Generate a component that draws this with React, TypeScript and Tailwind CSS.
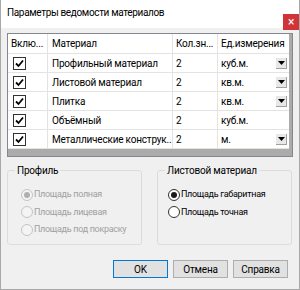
import React from "react";

const rows = [
  { name: "Профильный материал", qty: "2", unit: "куб.м.", combo: true },
  { name: "Листовой материал", qty: "2", unit: "кв.м.", combo: true },
  { name: "Плитка", qty: "2", unit: "кв.м.", combo: true },
  { name: "Объёмный", qty: "2", unit: "куб.м.", combo: false },
  { name: "Металлические конструк...", qty: "2", unit: "м.", combo: true },
];

const Check = () => (
  <div className="w-[13px] h-[13px] border border-[#333] bg-white flex items-center justify-center">
    <svg width="9" height="9" viewBox="0 0 9 9">
      <path d="M1 4.5 L3.5 7 L8 1.5" fill="none" stroke="#000" strokeWidth="1.8" />
    </svg>
  </div>
);

const ComboBtn = () => (
  <div className="w-[11px] h-[11px] bg-[#e8e8e8] border-r border-b border-[#a0a0a0] flex items-center justify-center">
    <svg width="7" height="4" viewBox="0 0 7 4">
      <path d="M0 0 H7 L3.5 4 Z" fill="#000" />
    </svg>
  </div>
);

const Radio = ({ checked, disabled, label }: { checked?: boolean; disabled?: boolean; label: string }) => (
  <div className="flex items-center h-[17.5px] whitespace-nowrap">
    <div
      className={
        "w-[12px] h-[12px] shrink-0 rounded-full border flex items-center justify-center " +
        (disabled ? "border-[#c4c4c4] bg-[#f4f4f4]" : "border-[#333] bg-white")
      }
    >
      {checked && (
        <div className={"w-[6px] h-[6px] rounded-full " + (disabled ? "bg-[#b0b0b0]" : "bg-[#1a1a1a]")} />
      )}
    </div>
    <span className={"ml-[1px] " + (disabled ? "text-[#a0a0a0]" : "text-black")}>{label}</span>
  </div>
);

export default function App() {
  return (
    <div
      className="w-[300px] h-[290px] bg-[#f0f0f0] border-x border-b border-[#a8a8a8] flex flex-col text-[10px] tracking-[-0.2px] text-black overflow-hidden"
      style={{ fontFamily: 'Roboto, "Noto Sans", sans-serif' }}
    >
      <div className="h-[28px] bg-white flex justify-between">
        <span className="pl-[6px] pt-[5px] text-[10px] tracking-[-0.35px]">Параметры ведомости материалов</span>
        <div className="mt-[14px] w-[16px] h-[16px] bg-[#d13438] text-white flex items-center justify-center text-[12px] leading-none">
          ×
        </div>
      </div>

      <div className="mx-[6px] mt-[5px] h-[124px] border border-[#828790] bg-[#ababab] flex flex-col">
        <div className="w-[281px] bg-white">
          <div className="flex h-[20px] border-b border-[#e3e3e3] whitespace-nowrap">
            <div className="w-[40px] px-[3px] flex items-center border-r border-[#e3e3e3]">Вклю...</div>
            <div className="w-[125px] px-[4px] flex items-center border-r border-[#e3e3e3]">Материал</div>
            <div className="w-[45px] px-[3px] flex items-center border-r border-[#e3e3e3]">Кол.зн...</div>
            <div className="flex-1 px-[3px] flex items-center">Ед.измерения</div>
          </div>
          {rows.map((r) => (
            <div key={r.name} className="flex h-[19px] border-b border-[#e3e3e3]">
              <div className="w-[40px] pl-[5px] flex items-center border-r border-[#e3e3e3]">
                <Check />
              </div>
              <div className="w-[125px] px-[4px] flex items-center border-r border-[#e3e3e3] whitespace-nowrap overflow-hidden">
                {r.name}
              </div>
              <div className="w-[45px] px-[3px] flex items-center border-r border-[#e3e3e3]">{r.qty}</div>
              <div className="flex-1 pl-[3px] pr-[2px] flex items-center justify-between">
                <span>{r.unit}</span>
                {r.combo && <ComboBtn />}
              </div>
            </div>
          ))}
        </div>
      </div>

      <div className="mx-[6px] mt-[6px] flex gap-[15px]">
        <fieldset className="w-[135px] h-[82px] border border-[#dcdcdc] rounded-[3px] pl-[13px] pr-0 pb-0">
          <legend className="px-[2px] -ml-[6px]">Профиль</legend>
          <div className="flex flex-col mt-[8px] text-[9px] tracking-[-0.3px]">
            <Radio checked disabled label="Площадь полная" />
            <Radio disabled label="Площадь лицевая" />
            <Radio disabled label="Площадь под покраску" />
          </div>
        </fieldset>
        <fieldset className="w-[135px] h-[82px] border border-[#dcdcdc] rounded-[3px] pl-[10px] pr-0 pb-0">
          <legend className="px-[2px] -ml-[3px]">Листовой материал</legend>
          <div className="flex flex-col mt-[8px] text-[9px] tracking-[-0.3px]">
            <Radio checked label="Площадь габаритная" />
            <Radio label="Площадь точная" />
          </div>
        </fieldset>
      </div>

      <div className="mt-[15px] mr-[11px] flex justify-end gap-[5px]">
        <button className="w-[55px] h-[18px] bg-[#e1e1e1] border border-[#0078d7] flex items-center justify-center">
          OK
        </button>
        <button className="w-[55px] h-[18px] bg-[#e1e1e1] border border-[#adadad] flex items-center justify-center">
          Отмена
        </button>
        <button className="w-[55px] h-[18px] bg-[#e1e1e1] border border-[#adadad] flex items-center justify-center">
          Справка
        </button>
      </div>
    </div>
  );
}
